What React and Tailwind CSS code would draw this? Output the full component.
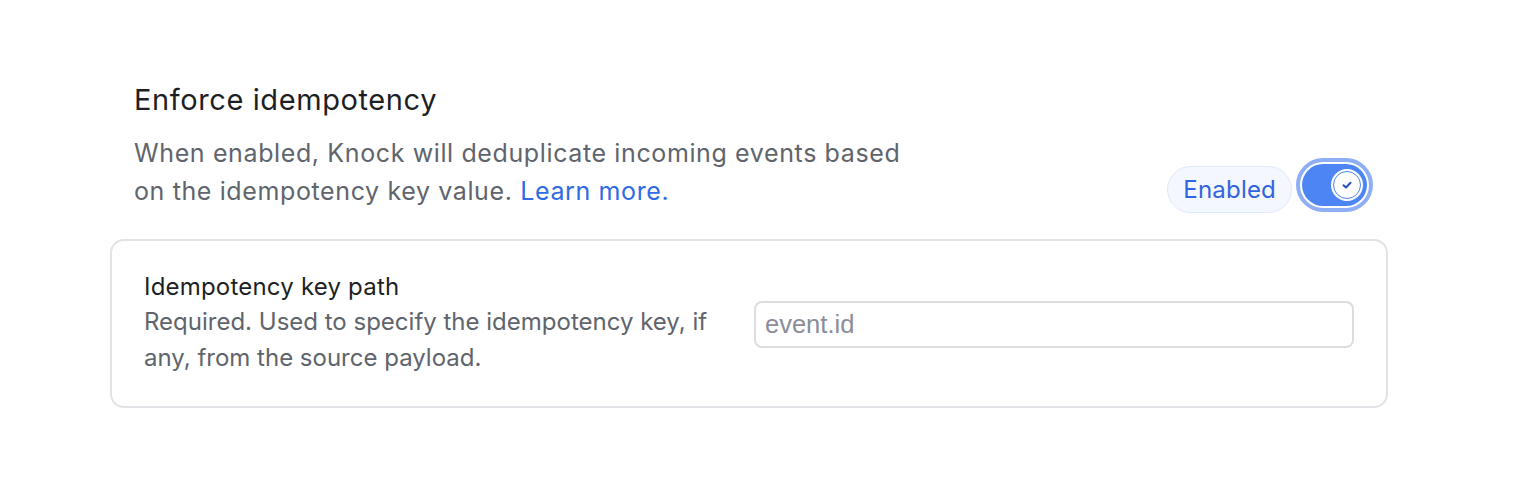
export default function App() {
  return (
    <div className="min-h-screen bg-white pt-[82px] pl-[110px] font-['Inter',sans-serif]">
      <div className="w-[1278px]">
        <div className="flex items-end justify-between pl-6 pr-[15px]">
          <div>
            <h2 className="text-[29px] leading-[36px] tracking-[0.6px] text-[#1e1f24]">
              Enforce idempotency
            </h2>
            <p className="mt-[16px] max-w-[790px] text-[25px] leading-[38px] tracking-[0.62px] text-[#60646c]">
              When enabled, Knock will deduplicate incoming events based on the idempotency key
              value. <span className="text-[#2f6be3]">Learn more.</span>
            </p>
          </div>
          <div className="mb-[-3px] flex items-end gap-[4px]">
            <span className="flex h-[47px] items-center rounded-full border border-[#dfe8fc] bg-[#f4f7fe] px-[15px] text-[24px] tracking-[0.2px] text-[#3064e0]">
              Enabled
            </span>
            <button className="mb-[1px] flex h-[54px] w-[77px] items-center rounded-full border-[4px] border-[#8eaef5] p-[2px]">
              <span className="flex h-full w-full items-center justify-end rounded-full bg-[#4d85f4] pr-[4px]">
                <span className="flex h-[32px] w-[32px] items-center justify-center rounded-full bg-white">
                  <span className="flex h-[28px] w-[28px] items-center justify-center rounded-full border-[1.5px] border-[#4d85f4] bg-white">
                    <svg width="14" height="14" viewBox="0 0 14 14" fill="none">
                      <path d="M3.5 7.2 L6 9.5 L10.5 4.8" stroke="#2453b8" strokeWidth="2" strokeLinecap="round" strokeLinejoin="round" />
                    </svg>
                  </span>
                </span>
              </span>
            </button>
          </div>
        </div>

        <div className="mt-[29px] grid grid-cols-[1fr_600px] items-center rounded-[14px] border-2 border-[#e2e3e6] px-[32px] pt-[31px] pb-[30px]">
          <div className="pr-[20px]">
            <div className="text-[24px] leading-[30px] tracking-[0.2px] text-[#1e1f24]">
              Idempotency key path
            </div>
            <p className="mt-[2px] text-[24px] leading-[36px] text-[#60646c]">
              Required. Used to specify the idempotency key, if any, from the source payload.
            </p>
          </div>
          <input
            type="text"
            placeholder="event.id"
            className="h-[47px] w-full rounded-[8px] border-2 border-[#dcdde0] px-[9px] font-['Liberation_Sans',Arial,sans-serif] text-[25.5px] text-[#1e1f24] placeholder:text-[#8b8d98] outline-none"
          />
        </div>
      </div>
    </div>
  );
}
